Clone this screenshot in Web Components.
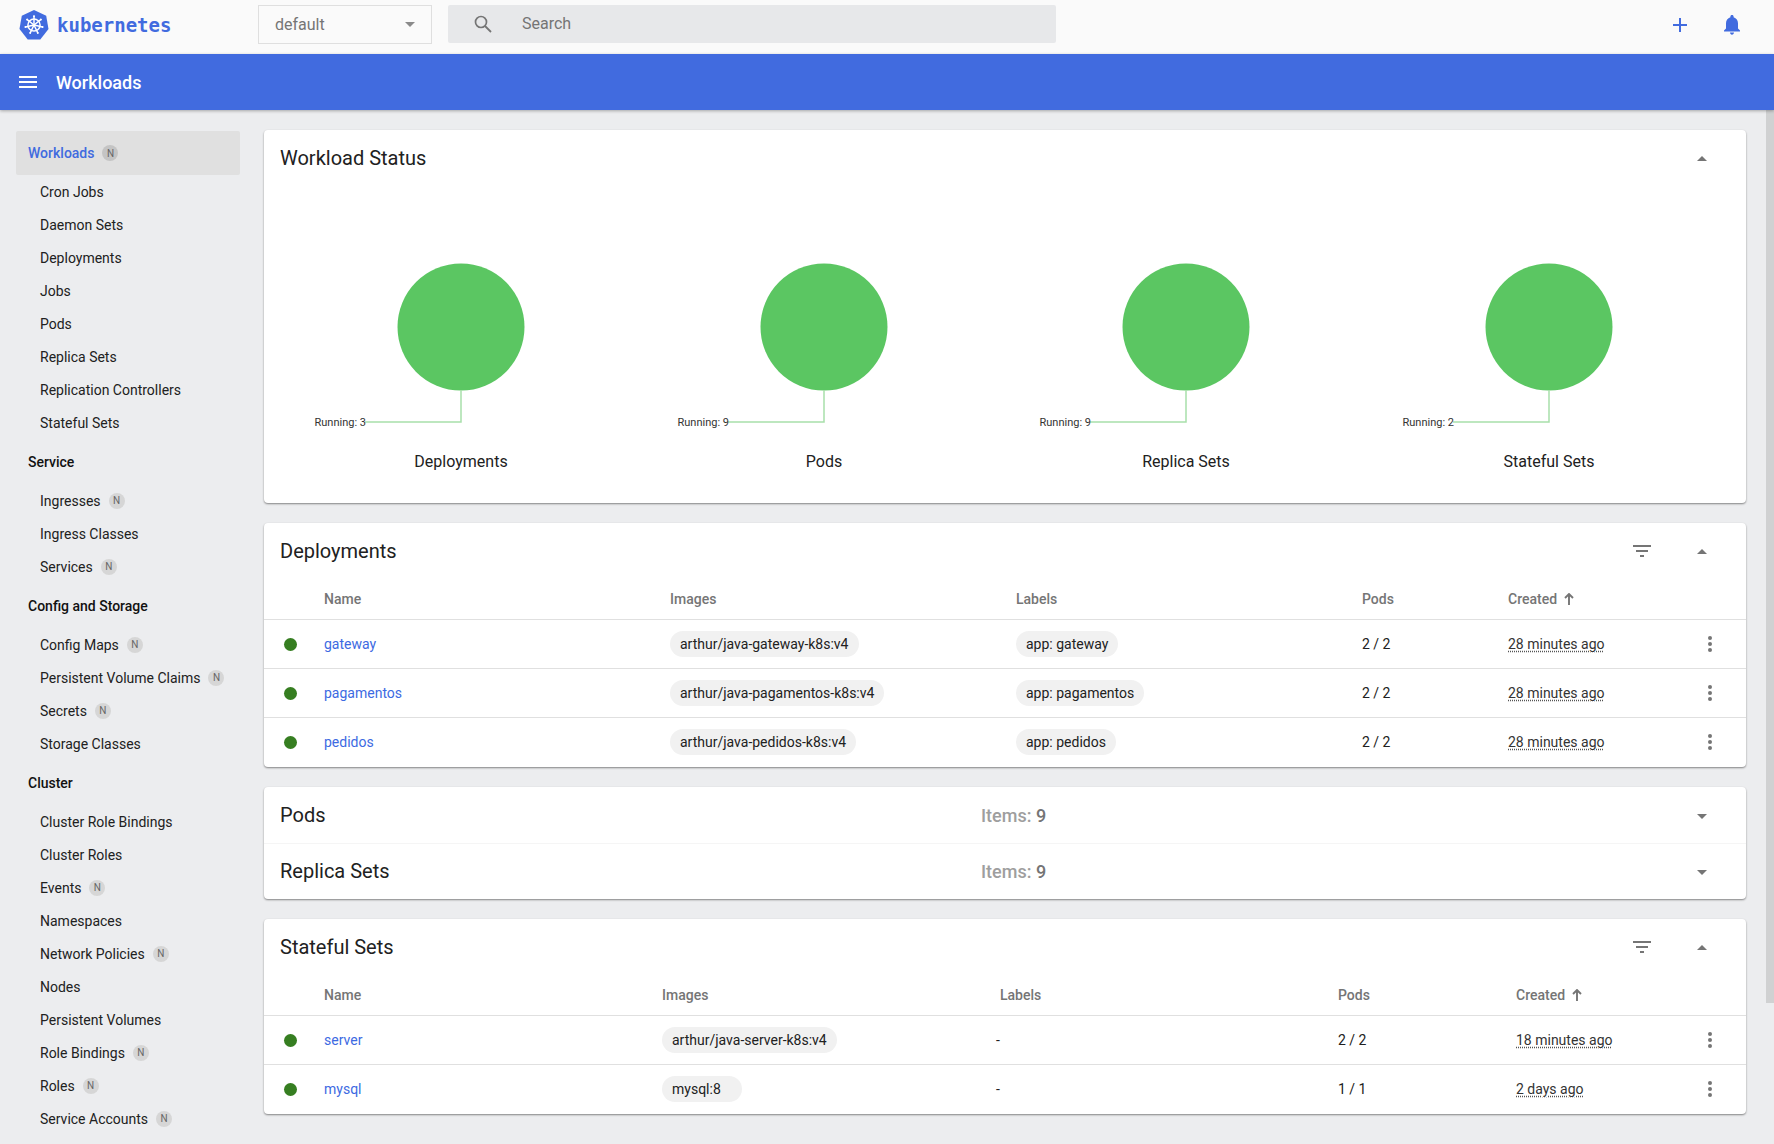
<!DOCTYPE html>
<html>
<head>
<meta charset="utf-8">
<title>Workloads</title>
<style>
  html, body { margin: 0; height: 100%; overflow: hidden; }
  body { font-family: Roboto, "Liberation Sans", sans-serif; background: #ecedef; color: #212121; font-size: 14px; }
  .shell { display: flex; flex-direction: column; height: 1144px; overflow: hidden; }
  .body { display: flex; flex: 1; min-height: 0; }
</style>
</head>
<body>
<div class="shell">
  <kd-topbar></kd-topbar>
  <kd-actionbar>Workloads</kd-actionbar>
  <div class="body">
    <kd-sidenav></kd-sidenav>
    <kd-content></kd-content>
    <kd-scrollbar></kd-scrollbar>
  </div>
</div>

<script>
const UP = `<svg width="12" height="6" viewBox="0 0 12 6"><path d="M1 6 6 1l5 5z" fill="#757575"/></svg>`;
const DOWN = `<svg width="12" height="7" viewBox="0 0 12 7"><path d="M1 2h10L6 7z" fill="#757575"/></svg>`;
const FILTER = `<svg width="18" height="12" viewBox="0 0 18 12"><path d="M0 0h18v2H0zM3 5h12v2H3zM7 10h4v2H7z" fill="#757575"/></svg>`;
const KEBAB = `<svg width="4" height="16" viewBox="0 0 4 16"><circle cx="2" cy="2" r="2" fill="#757575"/><circle cx="2" cy="8" r="2" fill="#757575"/><circle cx="2" cy="14" r="2" fill="#757575"/></svg>`;

class KdTopbar extends HTMLElement {
  connectedCallback() {
    const spokes = [0, 51.4, 102.8, 154.3, 205.7, 257.1, 308.6]
      .map(a => `<g transform="rotate(${a} 15 15.5)"><path d="M15 15.5V6.5" /><circle cx="15" cy="6.4" r="1" fill="#fff" stroke="none"/></g>`).join('');
    this.attachShadow({ mode: 'open' });
    this.shadowRoot.innerHTML = `
      <style>
        :host { display: flex; align-items: center; box-sizing: border-box; height: 54px; padding-bottom: 5px; background: #fafafa; flex: none; position: relative; }
        .logo { display: flex; align-items: center; width: 258px; padding-left: 19px; box-sizing: border-box; gap: 8px; }
        .word { font: bold 19px "DejaVu Sans Mono", monospace; color: #416bdf; letter-spacing: 0; }
        .select { box-sizing: border-box; width: 174px; height: 39px; margin-bottom: 1px; border: 1px solid #dfdfdf; display: flex; align-items: center; justify-content: space-between; padding: 0 16px; font-size: 16px; color: #757575; }
        .arrow { width: 0; height: 0; border: 5px solid transparent; border-top-color: #8a8a8a; border-bottom: 0; }
        .search { box-sizing: border-box; width: 608px; height: 38px; margin-left: 16px; margin-bottom: 1px; background: #e7e8ea; border-radius: 2px; display: flex; align-items: center; padding-left: 26px; gap: 30px; font-size: 16px; color: #757575; }
        .search span { margin-top: -1px; }
        .right { margin-left: auto; display: flex; align-items: center; gap: 37px; padding-right: 34px; padding-top: 1px; }
        svg { display: block; }
      </style>
      <div class="logo">
        <svg width="30" height="30" viewBox="0 0 30 31">
          <path d="M15 0 27.6 6 30 19.6 21.5 30.4H8.5L0 19.6 2.4 6z" fill="#416bdf"/>
          <g stroke="#fff" stroke-width="1.5" fill="none" stroke-linecap="round">
            <circle cx="15" cy="15.5" r="6.3"/>
            ${spokes}
          </g>
        </svg>
        <span class="word">kubernetes</span>
      </div>
      <div class="select"><span>default</span><span class="arrow"></span></div>
      <div class="search">
        <svg width="18" height="18" viewBox="0 0 18 18"><circle cx="7" cy="7" r="5.5" fill="none" stroke="#757575" stroke-width="1.7"/><path d="M11 11l6 6" stroke="#757575" stroke-width="1.8"/></svg>
        <span>Search</span>
      </div>
      <div class="right">
        <svg width="14" height="14" viewBox="0 0 14 14"><path d="M6 0h2v6h6v2H8v6H6V8H0V6h6z" fill="#416bdf"/></svg>
        <svg width="16" height="20" viewBox="0 0 16 20"><path d="M8 0c1 0 1.6.7 1.6 1.6v.6C12.400 3 14 5.400 14 8.300v5.200l2 2V16.500H0v-1l2-2V8.300C2 5.400 3.600 3 6.400 2.200v-.6C6.400.7 7 0 8 0zM6 17.500h4c0 1.200-.9 2.200-2 2.200s-2-1-2-2.200z" fill="#416bdf"/></svg>
      </div>`;
  }
}

class KdActionbar extends HTMLElement {
  connectedCallback() {
    this.attachShadow({ mode: 'open' });
    this.shadowRoot.innerHTML = `
      <style>
        :host { display: flex; align-items: center; height: 56px; flex: none; background: #416bdf; color: #fff; padding-left: 19px; gap: 19px; font-size: 18px; font-weight: 500; box-shadow: 0 1px 3px rgba(0,0,0,.3); position: relative; z-index: 2; }
        svg { display: block; }
      </style>
      <svg width="18" height="12" viewBox="0 0 18 12"><path d="M0 0h18v2H0zM0 5h18v2H0zM0 10h18v2H0z" fill="#fff"/></svg>
      <slot></slot>`;
  }
}

class KdNavItem extends HTMLElement {
  connectedCallback() {
    const badge = this.hasAttribute('ns') ? '<span class="n">N</span>' : '';
    this.attachShadow({ mode: 'open' });
    this.shadowRoot.innerHTML = `
      <style>
        :host { display: flex; align-items: center; height: 33px; padding-left: 24px; gap: 8px; color: #212121; white-space: nowrap; }
        :host([head]) { padding-left: 12px; font-weight: 500; color: #111; margin: 6px 0; }
        :host([active]) { height: 44px; padding-left: 12px; color: #416bdf; font-weight: 500; background: #e0e0e0; border-radius: 2px; }
        .n { width: 16px; height: 16px; border-radius: 50%; background: #d6d6d6; color: #666; font-size: 10px; font-weight: 400; display: flex; align-items: center; justify-content: center; }
        :host([active]) .n { background: #c4c4c4; }
      </style>
      <slot></slot>${badge}`;
  }
}

class KdSidenav extends HTMLElement {
  connectedCallback() {
    const nav = [
      ['a', 'Workloads', 1], ['i', 'Cron Jobs'], ['i', 'Daemon Sets'], ['i', 'Deployments'], ['i', 'Jobs'], ['i', 'Pods'], ['i', 'Replica Sets'], ['i', 'Replication Controllers'], ['i', 'Stateful Sets'],
      ['h', 'Service'], ['i', 'Ingresses', 1], ['i', 'Ingress Classes'], ['i', 'Services', 1],
      ['h', 'Config and Storage'], ['i', 'Config Maps', 1], ['i', 'Persistent Volume Claims', 1], ['i', 'Secrets', 1], ['i', 'Storage Classes'],
      ['h', 'Cluster'], ['i', 'Cluster Role Bindings'], ['i', 'Cluster Roles'], ['i', 'Events', 1], ['i', 'Namespaces'], ['i', 'Network Policies', 1], ['i', 'Nodes'], ['i', 'Persistent Volumes'], ['i', 'Role Bindings', 1], ['i', 'Roles', 1], ['i', 'Service Accounts', 1]
    ];
    const attr = { a: 'active', h: 'head', i: '' };
    this.attachShadow({ mode: 'open' });
    this.shadowRoot.innerHTML = `
      <style>
        :host { display: flex; flex-direction: column; width: 224px; flex: none; padding: 21px 24px 0 16px; }
      </style>
      ${nav.map(([t, label, ns]) => `<kd-nav-item ${attr[t]} ${ns ? 'ns' : ''}>${label}</kd-nav-item>`).join('')}`;
  }
}

class KdCard extends HTMLElement {
  connectedCallback() {
    this.attachShadow({ mode: 'open' });
    this.shadowRoot.innerHTML = `
      <style>
        :host { display: block; background: #fff; border-radius: 4px; box-shadow: 0 1px 2px rgba(0,0,0,.45); overflow: hidden; }
      </style>
      <slot></slot>`;
  }
}

class KdCardHead extends HTMLElement {
  connectedCallback() {
    const items = this.getAttribute('items');
    const open = this.hasAttribute('open');
    this.attachShadow({ mode: 'open' });
    this.shadowRoot.innerHTML = `
      <style>
        :host { display: flex; align-items: center; box-sizing: border-box; height: 56px; padding-left: 16px; font-size: 20px; color: #212121; position: relative; }
        :host([sep]) { box-shadow: inset 0 1px 0 #f5f5f5; }
        .items { position: absolute; left: 717px; font-size: 18px; color: #9e9e9e; font-weight: 500; margin-top: 1px; }
        .items b { color: #757575; font-weight: 500; }
        .tools { margin-left: auto; display: flex; align-items: center; }
        .filter { margin-right: 45px; display: flex; }
        .toggle { width: 12px; margin-right: 38px; display: flex; }
      </style>
      <slot></slot>
      ${items ? `<span class="items">Items: <b>${items}</b></span>` : ''}
      <div class="tools">
        ${this.hasAttribute('filter') ? `<span class="filter">${FILTER}</span>` : ''}
        <span class="toggle">${open ? UP : DOWN}</span>
      </div>`;
  }
}

class KdChart extends HTMLElement {
  connectedCallback() {
    const c = 181;
    this.attachShadow({ mode: 'open' });
    this.shadowRoot.innerHTML = `
      <style>
        :host { display: block; }
        svg { display: block; }
        text { font-family: Roboto, "Liberation Sans", sans-serif; fill: #333; }
        .title { fill: #212121; }
      </style>
      <svg width="362" height="317" viewBox="0 0 362 317">
        <circle cx="${c}" cy="141" r="63.5" fill="#5bc662"/>
        <path d="M${c} 204V236H${c - 96}" fill="none" stroke="#a8e0aa" stroke-width="1.500"/>
        <text x="${c - 95}" y="240" text-anchor="end" font-size="11">Running: ${this.getAttribute('count')}</text>
        <text class="title" x="${c}" y="281" text-anchor="middle" font-size="16">${this.getAttribute('label')}</text>
      </svg>`;
  }
}

class KdTable extends HTMLElement {
  connectedCallback() {
    const cols = this.getAttribute('cols');
    const rows = JSON.parse(this.getAttribute('rows'));
    const grid = `display: grid; grid-template-columns: ${cols}; align-items: center;`;
    this.attachShadow({ mode: 'open' });
    this.shadowRoot.innerHTML = `
      <style>
        :host { display: block; }
        .head { ${grid} height: 40px; font-weight: 500; color: #757575; border-bottom: 1px solid #e0e0e0; }
        .row { ${grid} height: 48px; border-bottom: 1px solid #e0e0e0; }
        .row:last-child { border-bottom: 0; padding-bottom: 1px; }
        .dot { width: 13px; height: 13px; border-radius: 50%; background: #367e21; margin-left: 20px; }
        .name { color: #3d6ae2; }
        .chip { display: inline-block; height: 26px; line-height: 26px; border-radius: 13px; background: #f1f1f1; padding: 0 10px; min-width: 60px; }
        .dash { margin-left: -4px; }
        .time { text-decoration: underline dotted #555; text-underline-offset: 2px; color: #333; }
        .sort { display: inline-flex; align-items: center; gap: 7px; }
        .kebab { display: flex; justify-content: center; padding-right: 18px; }
      </style>
      <div class="head">
        <span></span><span>Name</span><span>Images</span><span>Labels</span><span>Pods</span>
        <span class="sort">Created <svg width="10" height="12" viewBox="0 0 10 12"><path d="M5 1v11M1 5l4-4 4 4" fill="none" stroke="#757575" stroke-width="1.900"/></svg></span><span></span>
      </div>
      ${rows.map(r => `
        <div class="row">
          <span class="dot"></span>
          <span class="name">${r[0]}</span>
          <span><span class="chip">${r[1]}</span></span>
          <span>${r[2].startsWith('app') ? `<span class="chip">${r[2]}</span>` : `<span class="dash">${r[2]}</span>`}</span>
          <span>${r[3]}</span>
          <span><span class="time">${r[4]}</span></span>
          <span class="kebab">${KEBAB}</span>
        </div>`).join('')}`;
  }
}

class KdContent extends HTMLElement {
  connectedCallback() {
    const deploy = [
      ['gateway', 'arthur/java-gateway-k8s:v4', 'app: gateway', '2 / 2', '28 minutes ago'],
      ['pagamentos', 'arthur/java-pagamentos-k8s:v4', 'app: pagamentos', '2 / 2', '28 minutes ago'],
      ['pedidos', 'arthur/java-pedidos-k8s:v4', 'app: pedidos', '2 / 2', '28 minutes ago']
    ];
    const stateful = [
      ['server', 'arthur/java-server-k8s:v4', '-', '2 / 2', '18 minutes ago'],
      ['mysql', 'mysql:8', '-', '1 / 1', '2 days ago']
    ];
    const q = v => JSON.stringify(v).replace(/"/g, '&quot;');
    this.attachShadow({ mode: 'open' });
    this.shadowRoot.innerHTML = `
      <style>
        :host { display: flex; flex-direction: column; gap: 20px; width: 1482px; flex: none; padding: 20px 20px 0 0; }
        .charts { display: grid; grid-template-columns: repeat(4, 1fr); padding: 0 16px; height: 317px; }
      </style>
      <kd-card>
        <kd-card-head open>Workload Status</kd-card-head>
        <div class="charts">
          <kd-chart count="3" label="Deployments"></kd-chart>
          <kd-chart count="9" label="Pods"></kd-chart>
          <kd-chart count="9" label="Replica Sets"></kd-chart>
          <kd-chart count="2" label="Stateful Sets"></kd-chart>
        </div>
      </kd-card>
      <kd-card>
        <kd-card-head open filter>Deployments</kd-card-head>
        <kd-table cols="60px 346px 346px 346px 146px 184px 54px" rows="${q(deploy)}"></kd-table>
      </kd-card>
      <kd-card>
        <kd-card-head items="9">Pods</kd-card-head>
        <kd-card-head items="9" sep>Replica Sets</kd-card-head>
      </kd-card>
      <kd-card>
        <kd-card-head open filter>Stateful Sets</kd-card-head>
        <kd-table cols="60px 338px 338px 338px 178px 176px 54px" rows="${q(stateful)}"></kd-table>
      </kd-card>`;
  }
}

class KdScrollbar extends HTMLElement {
  connectedCallback() {
    this.attachShadow({ mode: 'open' });
    this.shadowRoot.innerHTML = `
      <style>
        :host { display: block; position: absolute; top: 110px; right: 0; width: 8px; height: 893px; background: #d0d1d2; }
      </style>`;
  }
}

customElements.define('kd-topbar', KdTopbar);
customElements.define('kd-actionbar', KdActionbar);
customElements.define('kd-nav-item', KdNavItem);
customElements.define('kd-sidenav', KdSidenav);
customElements.define('kd-card', KdCard);
customElements.define('kd-card-head', KdCardHead);
customElements.define('kd-chart', KdChart);
customElements.define('kd-table', KdTable);
customElements.define('kd-content', KdContent);
customElements.define('kd-scrollbar', KdScrollbar);
</script>
</body>
</html>
